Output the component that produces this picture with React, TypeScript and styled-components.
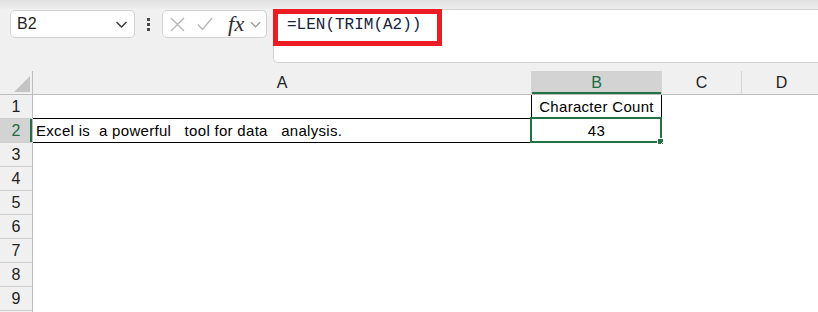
import React from 'react'
import styled, { createGlobalStyle } from 'styled-components'

const GREEN = '#217346'

const GlobalStyle = createGlobalStyle`
    html, body {
        margin: 0;
        padding: 0;
        background: #f0f0f0;
    }
    body {
        font-family: 'Liberation Sans', Arial, sans-serif;
        overflow: hidden;
    }
`

const Page = styled.div`
    width: 818px;
    height: 312px;
    overflow: hidden;
    background: #f0f0f0;
    display: flex;
    flex-direction: column;
`

const TopShade = styled.div`
    height: 9px;
    flex-shrink: 0;
    background: linear-gradient(#e1e1e1, #eeeeee);
`

const Toolbar = styled.div`
    display: flex;
    align-items: flex-start;
    padding-left: 10px;
    height: 54px;
    flex-shrink: 0;
`

const NameBox = styled.div`
    box-sizing: border-box;
    margin-top: 1px;
    width: 125px;
    height: 28px;
    background: #fff;
    border: 1px solid #d2d2d2;
    border-radius: 5px;
    display: flex;
    align-items: center;
    justify-content: space-between;
    padding: 0 6px 0 6px;
    font-size: 16px;
    color: #1f1f1f;
`

const Dots = styled.div`
    width: 27px;
    height: 28px;
    margin-top: 1px;
    display: flex;
    flex-direction: column;
    align-items: center;
    justify-content: center;
    gap: 2px;
`

const Dot = styled.span`
    width: 3px;
    height: 3px;
    background: #4a4a4a;
`

const FormulaButtons = styled.div`
    box-sizing: border-box;
    margin-top: 1px;
    width: 105px;
    height: 28px;
    background: #fff;
    border: 1px solid #d2d2d2;
    border-radius: 5px;
    display: flex;
    align-items: center;
    padding-left: 7px;
`

const IconSlot = styled.span<{ $ml?: number }>`
    display: flex;
    align-items: center;
    margin-left: ${(p) => p.$ml ?? 0}px;
`

const Fx = styled.span`
    font-family: 'Liberation Serif', 'Times New Roman', serif;
    font-style: italic;
    font-size: 22px;
    line-height: 24px;
    color: #2b2b2b;
    letter-spacing: 0.5px;
`

const FormulaBar = styled.div`
    position: relative;
    box-sizing: border-box;
    flex: 1;
    margin-left: 6px;
    height: 54px;
    background: #fff;
    border: 1px solid #d0d0d0;
    border-right: none;
    border-radius: 5px 0 0 5px;
`

const Highlight = styled.div`
    position: absolute;
    left: -1px;
    top: -1px;
    box-sizing: border-box;
    width: 169px;
    height: 37px;
    border: 5px solid #ed1c24;
    padding: 0 0 4px 9px;
    font-family: 'Liberation Mono', 'Courier New', monospace;
    font-size: 16px;
    line-height: 23px;
    color: #16233f;
    white-space: pre;
`

const Sheet = styled.div`
    margin-top: 8px;
    display: grid;
    grid-template-columns: 33px 499px 130px 80px 80px;
    grid-auto-rows: 24px;
    background: #fff;
`

const Corner = styled.div`
    position: relative;
    box-sizing: border-box;
    background: #f0f0f0;
    border-right: 1px solid #bdbdbd;
    border-bottom: 1px solid #bdbdbd;
    display: flex;
    align-items: flex-end;
    justify-content: flex-end;
    padding: 0 2px 2px 0;
`

const ColHeader = styled.div<{ $active?: boolean }>`
    box-sizing: border-box;
    background: ${(p) => (p.$active ? '#d3d3d3' : '#f0f0f0')};
    color: ${(p) => (p.$active ? '#1d6b3e' : '#222')};
    border-right: 1px solid #d4d4d4;
    border-bottom: 1px solid #bdbdbd;
    box-shadow: ${(p) => (p.$active ? `inset 0 -2px 0 ${GREEN}` : 'none')};
    display: flex;
    align-items: center;
    justify-content: center;
    font-size: 16px;
    padding-top: 1px;
`

const RowHeader = styled.div<{ $active?: boolean }>`
    box-sizing: border-box;
    background: ${(p) => (p.$active ? '#d3d3d3' : '#f0f0f0')};
    color: ${(p) => (p.$active ? '#1d6b3e' : '#222')};
    border-right: 1px solid #bdbdbd;
    border-bottom: 1px solid #cfcfcf;
    box-shadow: ${(p) => (p.$active ? `inset -2px 0 0 ${GREEN}` : 'none')};
    display: flex;
    align-items: center;
    justify-content: center;
    font-size: 16px;
`

const Cell = styled.div<{ $bottom?: string; $right?: string; $align?: string }>`
    position: relative;
    box-sizing: border-box;
    border-right: 1px solid ${(p) => p.$right ?? '#fff'};
    border-bottom: 1px solid ${(p) => p.$bottom ?? '#fff'};
    padding: 0 3px;
    font-size: 15px;
    letter-spacing: 0.3px;
    line-height: 23px;
    color: #000;
    text-align: ${(p) => p.$align ?? 'left'};
    white-space: pre;
`

const Selection = styled.div`
    position: absolute;
    left: -2px;
    top: -2px;
    right: -1px;
    bottom: -1px;
    border: 2px solid ${GREEN};
    pointer-events: none;
`

const FillHandle = styled.div`
    position: absolute;
    right: -4px;
    bottom: -4px;
    width: 5px;
    height: 5px;
    background: ${GREEN};
    border: 1px solid #fff;
`

const Chevron = ({ color, w }: { color: string; w: number }) => (
    <svg width={w} height={7} viewBox="0 0 12 7">
        <polyline points="1,1 6,6 11,1" fill="none" stroke={color} strokeWidth="1.3" />
    </svg>
)

const columns = ['A', 'B', 'C', 'D']
const rows = [1, 2, 3, 4, 5, 6, 7, 8, 9]

export default function App() {
    return (
        <Page>
            <GlobalStyle />
            <TopShade />
            <Toolbar>
                <NameBox>
                    <span>B2</span>
                    <Chevron color="#333" w={13} />
                </NameBox>
                <Dots>
                    <Dot />
                    <Dot />
                    <Dot />
                </Dots>
                <FormulaButtons>
                    <IconSlot>
                        <svg width="15" height="15" viewBox="0 0 15 15">
                            <path d="M1 1 L14 14 M14 1 L1 14" stroke="#b5b5b5" strokeWidth="1.3" />
                        </svg>
                    </IconSlot>
                    <IconSlot $ml={12}>
                        <svg width="16" height="14" viewBox="0 0 16 14">
                            <polyline points="1,7.5 5.5,12.5 15,1" fill="none" stroke="#b5b5b5" strokeWidth="1.3" />
                        </svg>
                    </IconSlot>
                    <IconSlot $ml={15}>
                        <Fx>fx</Fx>
                    </IconSlot>
                    <IconSlot $ml={5}>
                        <Chevron color="#9a9a9a" w={11} />
                    </IconSlot>
                </FormulaButtons>
                <FormulaBar>
                    <Highlight>=LEN(TRIM(A2))</Highlight>
                </FormulaBar>
            </Toolbar>
            <Sheet>
                <Corner>
                    <svg width="16" height="16" viewBox="0 0 16 16">
                        <polygon points="16,0 16,16 0,16" fill="#c4c4c4" />
                    </svg>
                </Corner>
                {columns.map((c) => (
                    <ColHeader key={c} $active={c === 'B'}>
                        {c}
                    </ColHeader>
                ))}
                {rows.map((r) => (
                    <React.Fragment key={r}>
                        <RowHeader $active={r === 2}>{r}</RowHeader>
                        {r === 1 && (
                            <>
                                <Cell $bottom="#000" $right="#000" />
                                <Cell $right="#000" $align="center">
                                    Character Count
                                </Cell>
                            </>
                        )}
                        {r === 2 && (
                            <>
                                <Cell $bottom="#000" $right="#000">
                                    {'Excel is  a powerful   tool for data   analysis.'}
                                </Cell>
                                <Cell $align="center">
                                    43
                                    <Selection>
                                        <FillHandle />
                                    </Selection>
                                </Cell>
                            </>
                        )}
                        {r > 2 && (
                            <>
                                <Cell />
                                <Cell />
                            </>
                        )}
                        <Cell />
                        <Cell />
                    </React.Fragment>
                ))}
                <RowHeader />
                <Cell />
                <Cell />
                <Cell />
                <Cell />
            </Sheet>
        </Page>
    )
}
